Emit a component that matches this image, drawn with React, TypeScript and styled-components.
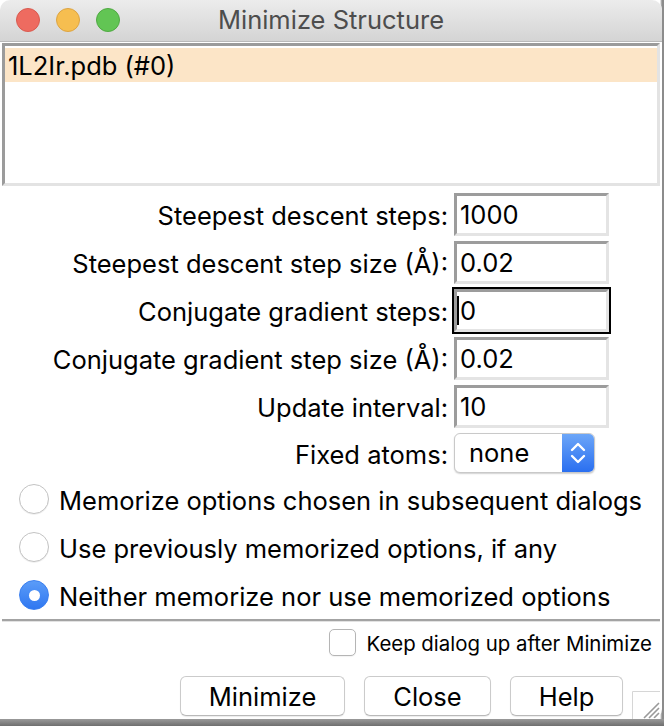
import React from "react";
import styled, { createGlobalStyle } from "styled-components";

const GlobalStyle = createGlobalStyle`
  html, body { margin: 0; padding: 0; background: #fff; }
  body { font-family: Inter, "Liberation Sans", sans-serif; overflow: hidden; }
  * { box-sizing: border-box; }
`;

const FONT = 25.5;

const Page = styled.div`
  width: 664px;
  height: 726px;
  display: flex;
  flex-direction: column;
  background: linear-gradient(to right, #fff 0, #fff 660px, #8c8c8c 662px);
`;

const Desk = styled.div`
  flex: 1;
  background: linear-gradient(#9a9a9a, #6f6f6f);
`;

const Window = styled.div`
  position: relative;
  width: 662px;
  height: 719px;
  background: #fff;
  border-radius: 10px;
  overflow: hidden;
  display: flex;
  flex-direction: column;
  font-size: ${FONT}px;
  color: #000;
`;

const TitleBar = styled.div`
  height: 42px;
  flex: none;
  display: grid;
  grid-template-columns: 1fr auto 1fr;
  align-items: center;
  background: linear-gradient(#ececec, #d4d4d4);
  border-bottom: 1px solid #b9b9b9;
  padding-bottom: 1px;
`;

const Lights = styled.div`
  display: flex;
  gap: 16px;
  padding-left: 16px;
`;

const Light = styled.span<{ $c: string; $b: string }>`
  width: 24px;
  height: 24px;
  border-radius: 50%;
  background: ${(p) => p.$c};
  border: 1px solid ${(p) => p.$b};
`;

const Title = styled.div`
  color: #4d4d4d;
  font-size: ${FONT}px;
  line-height: 1;
`;

const ListBox = styled.div`
  margin: 1px 2px 0 2px;
  height: 143px;
  flex: none;
  border-style: solid;
  border-width: 3px;
  border-color: #9b9b9b #e3e3e3 #e3e3e3 #9b9b9b;
  background: #fff;
  padding-top: 2px;
`;

const ListRow = styled.div<{ $selected?: boolean }>`
  height: 34px;
  display: flex;
  align-items: center;
  padding-left: 3px;
  background: ${(p) => (p.$selected ? "#fce5c7" : "transparent")};
`;

const Form = styled.div`
  margin-top: 7px;
  display: grid;
  grid-template-columns: 1fr 155px;
  column-gap: 6px;
  row-gap: 5px;
  padding-right: 53px;
`;

const Label = styled.div`
  justify-self: end;
  align-self: center;
  line-height: 1;
  padding-top: 3px;
  white-space: nowrap;
`;

const Field = styled.div<{ $focused?: boolean }>`
  position: relative;
  height: 43px;
  display: flex;
  align-items: center;
  padding-left: 3px;
  padding-top: 1px;
  background: #fff;
  border-style: solid;
  border-width: 3px;
  border-color: #9c9c9c #e4e4e4 #e4e4e4 #9c9c9c;
  outline: ${(p) => (p.$focused ? "2px solid #000" : "none")};
  line-height: 1;
`;

const Caret = styled.span`
  position: absolute;
  left: 0;
  top: 4px;
  bottom: 4px;
  width: 2px;
  background: #000;
`;

const Popup = styled.div`
  width: 141px;
  height: 40px;
  display: flex;
  align-items: stretch;
  background: #fff;
  border: 1px solid #c9c9c9;
  border-radius: 6px;
  box-shadow: 0 1px 1.5px rgba(0, 0, 0, 0.18);
  overflow: hidden;
`;

const PopupText = styled.div`
  flex: 1;
  display: flex;
  align-items: center;
  padding-left: 14px;
  line-height: 1;
`;

const Stepper = styled.div`
  width: 32px;
  display: flex;
  align-items: center;
  justify-content: center;
  background: linear-gradient(#6ca6f8, #2a6ff0);
`;

const Radios = styled.div`
  margin-top: 2px;
  padding-left: 19px;
  display: flex;
  flex-direction: column;
`;

const RadioRow = styled.div`
  height: 48px;
  display: flex;
  align-items: center;
  gap: 10px;
  line-height: 1;
`;

const RadioDot = styled.span<{ $on?: boolean }>`
  flex: none;
  width: 30px;
  height: 30px;
  border-radius: 50%;
  display: flex;
  align-items: center;
  justify-content: center;
  background: ${(p) => (p.$on ? "linear-gradient(#5b9cf8, #2f77f1)" : "#fff")};
  border: 1px solid ${(p) => (p.$on ? "#3a7ff0" : "#c3c3c3")};
  box-shadow: ${(p) => (p.$on ? "none" : "0 1px 0.5px rgba(0,0,0,0.06)")};
  &::after {
    content: "";
    display: ${(p) => (p.$on ? "block" : "none")};
    width: 11px;
    height: 11px;
    border-radius: 50%;
    background: #fff;
  }
`;

const RadioText = styled.span`
  padding-top: 3px;
  white-space: nowrap;
`;

const Separator = styled.div`
  margin: 0 2px;
  height: 3px;
  border-top: 2px solid #a3a3a3;
  border-bottom: 1px solid #e2e2e2;
`;

const CheckRow = styled.div`
  margin-top: 6px;
  height: 28px;
  display: flex;
  justify-content: flex-end;
  align-items: center;
  gap: 10px;
  padding-right: 10px;
`;

const CheckBox = styled.span`
  width: 27px;
  height: 27px;
  border-radius: 5px;
  border: 1px solid #b5b5b5;
  background: #fff;
  box-shadow: 0 1px 1px rgba(0, 0, 0, 0.05);
`;

const CheckText = styled.span`
  font-size: 20.4px;
  line-height: 1;
  padding-top: 4px;
  white-space: nowrap;
`;

const Buttons = styled.div`
  margin-top: 20px;
  display: flex;
  justify-content: flex-end;
  gap: 19px;
  padding-right: 39px;
`;

const Button = styled.button<{ $w: number }>`
  width: ${(p) => p.$w}px;
  height: 40px;
  padding: 1px 0 0;
  font-family: inherit;
  font-size: ${FONT}px;
  line-height: 1;
  color: #000;
  background: #fff;
  border: 1px solid #cbcbcb;
  border-bottom-color: #b9b9b9;
  border-radius: 6px;
  box-shadow: 0 1px 1px rgba(0, 0, 0, 0.08);
`;

const Grip = styled.svg`
  position: absolute;
  right: 2px;
  bottom: 0;
`;

const fields: { label: string; value: string; focused?: boolean }[] = [
  { label: "Steepest descent steps:", value: "1000" },
  { label: "Steepest descent step size (Å):", value: "0.02" },
  { label: "Conjugate gradient steps:", value: "0", focused: true },
  { label: "Conjugate gradient step size (Å):", value: "0.02" },
  { label: "Update interval:", value: "10" },
];

const radios = [
  "Memorize options chosen in subsequent dialogs",
  "Use previously memorized options, if any",
  "Neither memorize nor use memorized options",
];

export default function App() {
  return (
    <Page>
      <GlobalStyle />
      <Window>
        <TitleBar>
          <Lights>
            <Light $c="#ee6b60" $b="#d85b50" />
            <Light $c="#f6be50" $b="#dca443" />
            <Light $c="#62c554" $b="#50a943" />
          </Lights>
          <Title>Minimize Structure</Title>
          <span />
        </TitleBar>
        <ListBox>
          <ListRow $selected>1L2Ir.pdb (#0)</ListRow>
        </ListBox>
        <Form>
          {fields.map((f) => (
            <React.Fragment key={f.label}>
              <Label>{f.label}</Label>
              <Field $focused={f.focused}>
                {f.focused && <Caret />}
                {f.value}
              </Field>
            </React.Fragment>
          ))}
          <Label>Fixed atoms:</Label>
          <Popup>
            <PopupText>none</PopupText>
            <Stepper>
              <svg width="16" height="22" viewBox="0 0 16 22">
                <path d="M2 8 L8 2 L14 8" fill="none" stroke="#fff" strokeWidth="2.4" strokeLinecap="round" strokeLinejoin="round" />
                <path d="M2 14 L8 20 L14 14" fill="none" stroke="#fff" strokeWidth="2.4" strokeLinecap="round" strokeLinejoin="round" />
              </svg>
            </Stepper>
          </Popup>
        </Form>
        <Radios>
          {radios.map((r, i) => (
            <RadioRow key={r}>
              <RadioDot $on={i === 2} />
              <RadioText>{r}</RadioText>
            </RadioRow>
          ))}
        </Radios>
        <Separator />
        <CheckRow>
          <CheckBox />
          <CheckText>Keep dialog up after Minimize</CheckText>
        </CheckRow>
        <Buttons>
          <Button $w={165}>Minimize</Button>
          <Button $w={127}>Close</Button>
          <Button $w={113}>Help</Button>
        </Buttons>
        <Grip width="28" height="28" viewBox="0 0 28 28">
          <path d="M0.5 28 V0.5 H28" fill="none" stroke="#d6d6d6" strokeWidth="1" />
          <path d="M12 27 L27 12 M17 27 L27 17 M22 27 L27 22" stroke="#9a9a9a" strokeWidth="1.6" />
        </Grip>
      </Window>
      <Desk />
    </Page>
  );
}
